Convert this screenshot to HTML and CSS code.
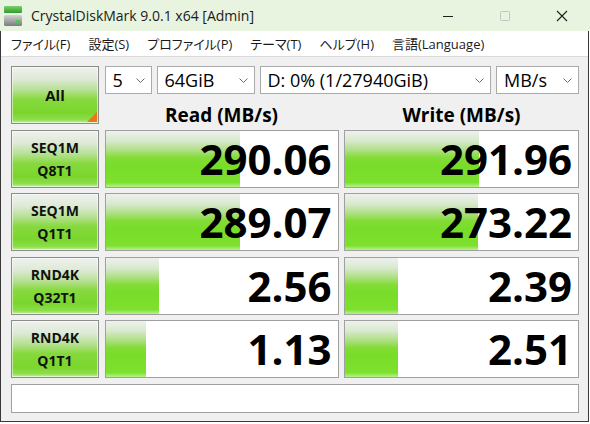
FILE: index.html
```html
<!DOCTYPE html>
<html lang="ja">
<head>
<meta charset="utf-8">
<title>CrystalDiskMark 9.0.1 x64 [Admin]</title>
<link rel="stylesheet" href="styles.css">
</head>
<body>
<header class="titlebar">
  <svg class="app-icon" viewBox="0 0 18 20" aria-hidden="true">
    <defs>
      <linearGradient id="lid" x1="0" y1="0" x2="0" y2="1">
        <stop offset="0" stop-color="#7fd06a"/>
        <stop offset="1" stop-color="#2f9a33"/>
      </linearGradient>
      <linearGradient id="body" x1="0" y1="0" x2="0" y2="1">
        <stop offset="0" stop-color="#d2d2d2"/>
        <stop offset="1" stop-color="#7c7c7c"/>
      </linearGradient>
    </defs>
    <rect x="0" y="0" width="18" height="7" rx="1" fill="url(#lid)"/>
    <rect x="0" y="9" width="18" height="11" rx="1.5" fill="url(#body)"/>
    <rect x="12" y="14" width="4" height="2.5" fill="#3fd23f"/>
  </svg>
  <span class="title">CrystalDiskMark 9.0.1 x64 [Admin]</span>
  <div class="controls">
    <span class="ctl"><svg viewBox="0 0 12 12"><line x1="1" y1="6.5" x2="11" y2="6.5" stroke="#1e1e1e" stroke-width="1"/></svg></span>
    <span class="ctl"><svg viewBox="0 0 12 12"><rect x="1.5" y="1.5" width="9" height="9" rx="1" fill="none" stroke="#c4c4c4" stroke-width="1"/></svg></span>
    <span class="ctl"><svg viewBox="0 0 12 12"><path d="M1 1 L11 11 M11 1 L1 11" stroke="#1e1e1e" stroke-width="1.1" fill="none"/></svg></span>
  </div>
</header>
<div class="frame">
  <nav class="menu">
    <span>ファイル(F)</span>
    <span>設定(S)</span>
    <span>プロファイル(P)</span>
    <span>テーマ(T)</span>
    <span>ヘルプ(H)</span>
    <span>言語(Language)</span>
  </nav>
  <main class="content">
    <div class="board">
      <div class="btn all">All</div>
      <div class="top">
        <div class="combos">
          <div class="combo c-count"><span>5</span><svg viewBox="0 0 9 5"><polyline points="0.5,0.5 4.5,4.5 8.5,0.5" fill="none" stroke="#6a6a6a" stroke-width="1"/></svg></div>
          <div class="combo c-size"><span>64GiB</span><svg viewBox="0 0 9 5"><polyline points="0.5,0.5 4.5,4.5 8.5,0.5" fill="none" stroke="#6a6a6a" stroke-width="1"/></svg></div>
          <div class="combo c-drive"><span>D: 0% (1/27940GiB)</span><svg viewBox="0 0 9 5"><polyline points="0.5,0.5 4.5,4.5 8.5,0.5" fill="none" stroke="#6a6a6a" stroke-width="1"/></svg></div>
          <div class="combo c-unit"><span>MB/s</span><svg viewBox="0 0 9 5"><polyline points="0.5,0.5 4.5,4.5 8.5,0.5" fill="none" stroke="#6a6a6a" stroke-width="1"/></svg></div>
        </div>
        <div class="heads">
          <div class="head">Read (MB/s)</div>
          <div class="head">Write (MB/s)</div>
        </div>
      </div>

      <div class="btn label"><span>SEQ1M</span><span>Q8T1</span></div>
      <div class="cell"><div class="bar" style="width:134px"></div><div class="num">290.06</div></div>
      <div class="cell"><div class="bar" style="width:134px"></div><div class="num">291.96</div></div>

      <div class="btn label"><span>SEQ1M</span><span>Q1T1</span></div>
      <div class="cell"><div class="bar" style="width:134px"></div><div class="num">289.07</div></div>
      <div class="cell"><div class="bar" style="width:133px"></div><div class="num">273.22</div></div>

      <div class="btn label"><span>RND4K</span><span>Q32T1</span></div>
      <div class="cell"><div class="bar" style="width:53px"></div><div class="num">2.56</div></div>
      <div class="cell"><div class="bar" style="width:53px"></div><div class="num">2.39</div></div>

      <div class="btn label"><span>RND4K</span><span>Q1T1</span></div>
      <div class="cell"><div class="bar" style="width:40px"></div><div class="num">1.13</div></div>
      <div class="cell"><div class="bar" style="width:53px"></div><div class="num">2.51</div></div>

      <div class="msg"></div>
    </div>
  </main>
</div>
</body>
</html>
```
FILE: styles.css
```css
* { box-sizing: border-box; }
html, body { margin: 0; padding: 0; }
body {
  width: 590px;
  height: 424px;
  overflow: hidden;
  background: #ffffff;
  color: #000;
  font-family: "Open Sans", "Noto Sans CJK JP", sans-serif;
}

/* title bar */
.titlebar {
  height: 31px;
  background: #e8f4df;
  display: flex;
  align-items: center;
}
.app-icon { width: 18px; height: 20px; margin: 0 9px 0 4px; flex: none; }
.title { flex: 1; font-size: 14px; color: #1a1a1a; white-space: nowrap; }
.controls { display: flex; height: 31px; }
.ctl { width: 57px; display: flex; align-items: center; justify-content: center; }
.ctl svg { width: 12px; height: 12px; }

/* window frame */
.frame {
  width: 589px;
  border-left: 1px solid #3a3a3a;
  border-right: 1px solid #3a3a3a;
  border-bottom: 1px solid #3a3a3a;
}
.menu {
  height: 26px;
  background: #fff;
  border-bottom: 1px solid #dadada;
  display: flex;
  align-items: center;
  gap: 18px;
  padding-left: 10px;
  font-size: 13px;
  font-feature-settings: "palt";
  color: #1a1a1a;
  white-space: nowrap;
}
.content {
  height: 364px;
  background: #f0f0f0;
  padding: 9px 9px 0 10px;
}

/* main board */
.board {
  display: grid;
  grid-template-columns: 88px 234px 235px;
  grid-template-rows: 58px 58px 58px 58px 58px 29px;
  column-gap: 5.5px;
  row-gap: 5.5px;
}
.top { grid-column: 2 / 4; display: flex; flex-direction: column; }
.combos { height: 28px; display: flex; gap: 5px; }
.combo {
  height: 28px;
  background: #fff;
  border: 1px solid #ababab;
  display: flex;
  align-items: center;
  justify-content: space-between;
  padding: 0 6px 0 7px;
  font-size: 18px;
  white-space: nowrap;
}
.combo svg { width: 9px; height: 5px; flex: none; }
.c-count { width: 47px; }
.c-size { width: 98px; }
.c-drive { flex: 1; }
.c-unit { width: 83px; }

.heads {
  flex: 1;
  display: grid;
  grid-template-columns: 234px 235px;
  column-gap: 5.5px;
}
.head {
  align-self: end;
  text-align: center;
  font-weight: 700;
  font-size: 19px;
  line-height: 18px;
}

/* buttons */
.btn {
  border: 1px solid #8c8c8c;
  box-shadow: inset 0 0 0 1px rgba(255, 255, 255, 0.55);
  background: linear-gradient(to bottom,
    #eef2ec 0%, #dde9d6 22%, #b4e08e 42%, #86d93e 58%,
    #7ad62c 82%, #8ede4c 94%, #c4f0a0 100%);
  display: flex;
  flex-direction: column;
  align-items: center;
  justify-content: center;
  font-weight: 700;
  color: #111;
}
.all { font-size: 15px; position: relative; }
.all::after {
  content: "";
  position: absolute;
  right: 1px;
  bottom: 1px;
  width: 0;
  height: 0;
  border-left: 10px solid transparent;
  border-bottom: 10px solid #f07418;
}
.label { font-size: 14px; line-height: 23px; }

/* value cells */
.cell {
  border: 1px solid #a0a0a0;
  background: #fff;
  display: grid;
  overflow: hidden;
}
.cell > * { grid-area: 1 / 1; }
.bar {
  height: 100%;
  background: linear-gradient(to bottom,
    #eef1ec 0%, #d8e9cd 18%, #a9df7c 36%, #82dc36 48%,
    #78dd28 62%, #7de02e 92%, #b6f28a 100%);
}
.num {
  justify-self: end;
  align-self: center;
  font-size: 42px;
  font-weight: 700;
  line-height: 1;
  padding-right: 6px;
}

.msg {
  grid-column: 1 / 4;
  background: #fff;
  border: 1px solid #a0a0a0;
}
```
